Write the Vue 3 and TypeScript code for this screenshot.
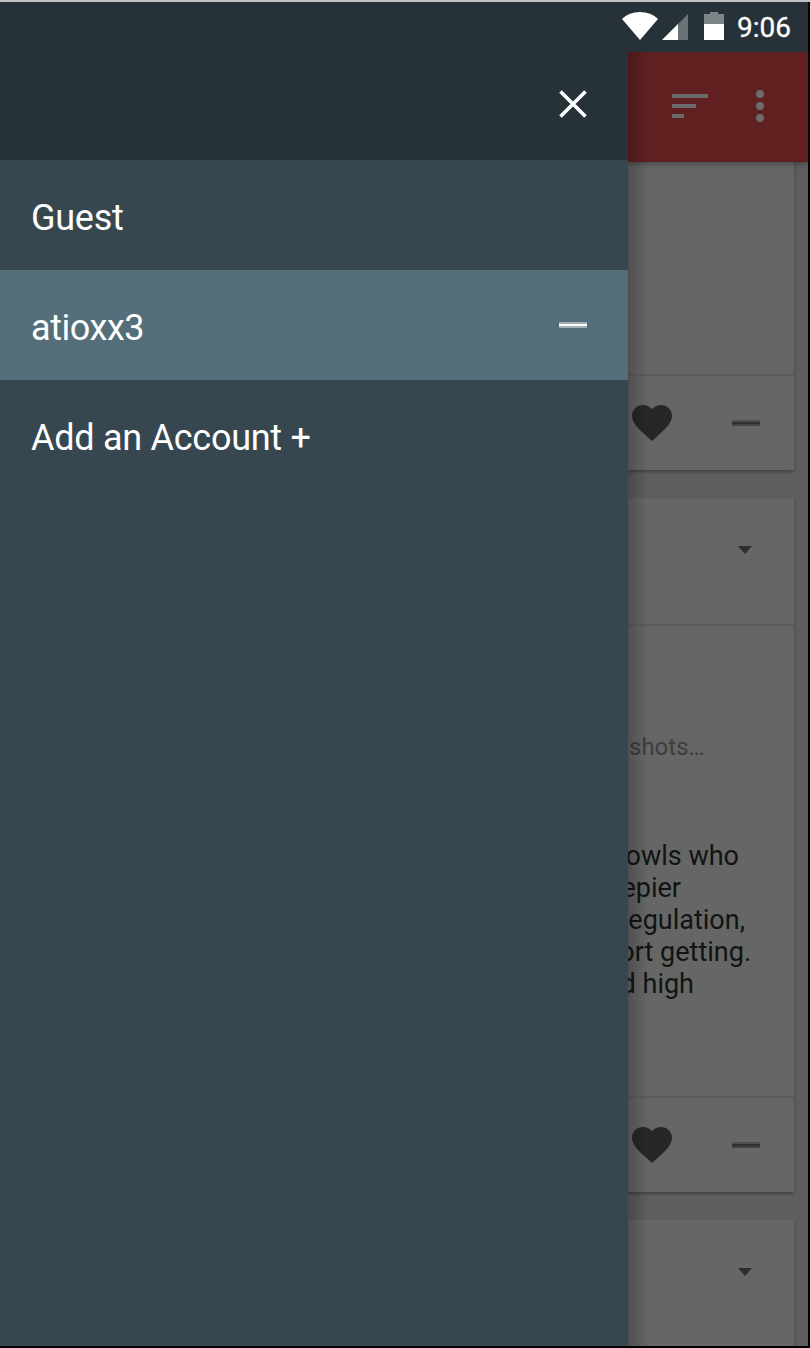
<script setup lang="ts">
interface Account {
  name: string
  active: boolean
}

interface BodyLine {
  text: string
  end: number
}

const accounts: Account[] = [
  { name: 'Guest', active: false },
  { name: 'atioxx3', active: true },
  { name: 'Add an Account +', active: false },
]

// `end` is the free space to the right of each line inside the card.
const lines: BodyLine[] = [
  { text: 'owls who', end: 55 },
  { text: 'epier', end: 113 },
  { text: 'egulation,', end: 49 },
  { text: 'ort getting.', end: 43 },
  { text: 'd high', end: 100 },
]
const heart =
  'M12 21.35l-1.45-1.32C5.4 15.36 2 12.28 2 8.5 2 5.42 4.42 3 7.5 3c1.74 0 3.41.81 4.5 2.09C13.09 3.81 14.76 3 16.5 3 19.58 3 22 5.42 22 8.5c0 3.78-3.4 6.86-8.55 11.54L12 21.35z'
</script>

<template>
  <div class="device">
    <div class="screen">
      <header class="status">
        <svg class="wifi" viewBox="0 0 36 28"><path d="M18 28L0 7Q7 0 18 0T36 7Z" fill="#fff" /></svg>
        <svg class="signal" viewBox="0 0 26 26">
          <path d="M26 0V26H0Z" fill="#697275" />
          <path d="M16 10V26H0Z" fill="#fff" />
        </svg>
        <svg class="battery" viewBox="0 0 20 28">
          <path d="M6 0H14V2H20V12H0V2H6Z" fill="#7d8588" />
          <path d="M0 12H20V28H0Z" fill="#fff" />
        </svg>
        <span class="clock">9:06</span>
      </header>
      <div class="main">
        <nav class="drawer">
          <div class="drawer-head">
            <svg class="close" viewBox="0 0 28 28"><path d="M1.5 1.5L26.5 26.5M26.5 1.5L1.5 26.5" stroke="#fff" stroke-width="3.6" /></svg>
          </div>
          <div v-for="a in accounts" :key="a.name" class="row" :class="{ active: a.active }">
            <span class="name">{{ a.name }}</span>
            <span v-if="a.active" class="minus light"></span>
          </div>
        </nav>
        <section class="content">
          <div class="toolbar">
            <svg class="sort" viewBox="0 0 36 24"><path d="M0 0H36V4H0ZM0 10H24V14H0ZM0 20H12V24H0Z" fill="#6b6b6b" /></svg>
            <svg class="more" viewBox="0 0 8 32">
              <circle cx="4" cy="4" r="4" /><circle cx="4" cy="16" r="4" /><circle cx="4" cy="28" r="4" />
            </svg>
          </div>
          <div class="feed">
            <article class="card first">
              <div class="blank"></div>
              <div class="actions">
                <svg class="heart" viewBox="2 3 20 18.35" preserveAspectRatio="none"><path :d="heart" /></svg>
                <span class="minus"></span>
              </div>
            </article>
            <article class="card second">
              <div class="card-head"><svg class="caret" viewBox="0 0 14 8"><path d="M0 0H14L7 8Z" /></svg></div>
              <div class="card-body">
                <p class="link">shots…</p>
                <p v-for="l in lines" :key="l.text" class="line" :style="{ paddingRight: l.end + 'px' }">{{ l.text }}</p>
              </div>
              <div class="actions">
                <svg class="heart" viewBox="2 3 20 18.35" preserveAspectRatio="none"><path :d="heart" /></svg>
                <span class="minus"></span>
              </div>
            </article>
            <article class="card third">
              <div class="card-head"><svg class="caret" viewBox="0 0 14 8"><path d="M0 0H14L7 8Z" /></svg></div>
            </article>
          </div>
          <div class="edge"></div>
        </section>
      </div>
    </div>
  </div>
</template>

<style>
body { margin: 0; background: #000; }
</style>

<style scoped>
.device {
  box-sizing: border-box;
  width: 810px;
  height: 1348px;
  border-top: 2px solid #bfc1c1;
  background: #000;
  overflow: hidden;
  font-family: Roboto, sans-serif;
}
svg { display: block; flex: none; }
p { margin: 0; }
.screen { width: 808px; height: 1344px; overflow: hidden; background: #263238; }
.status { display: flex; height: 50px; align-items: flex-start; background: #273238; }
.wifi { width: 36px; height: 28px; margin: 10px 0 0 622px; }
.signal { width: 26px; height: 26px; margin: 12px 0 0 4px; }
.battery { width: 20px; height: 28px; margin: 10px 0 0 16px; }
.clock { margin: 10px 0 0 13px; font-size: 28px; line-height: 32px; color: #fff; white-space: nowrap; -webkit-text-stroke: 0.3px #fff; }
.main { display: flex; height: 1294px; }
.drawer { width: 628px; flex: none; background: #37474f; }
.drawer-head { display: flex; height: 108px; justify-content: flex-end; background: #273238; }
.close { width: 28px; height: 28px; margin: 38px 41px 0 0; }
.row {
  box-sizing: border-box;
  display: flex;
  height: 110px;
  padding: 0 41px 0 31px;
  align-items: center;
  justify-content: space-between;
  color: #fff;
}
.row.active { background: #546e7a; }
.name { font-size: 36px; line-height: 42px; padding-top: 5px; white-space: nowrap; letter-spacing: -0.27px; }
.row.active .name { padding-top: 6px; letter-spacing: -0.45px; }
.minus { width: 28px; height: 4px; flex: none; background: #343434; }
.minus.light { height: 6px; background: linear-gradient(#a3b0b7 2px, #fff 2px 4px, #a3b0b7 4px); }
.content { position: relative; width: 180px; overflow: hidden; background: #5e5e5e; }
.toolbar { position: relative; display: flex; height: 110px; background: #602020; box-shadow: 0 2px 6px rgba(0, 0, 0, 0.3); z-index: 1; }
.sort { width: 36px; height: 24px; margin: 42px 0 0 44px; }
.more { width: 8px; height: 32px; margin: 38px 0 0 48px; fill: #6b6b6b; }
.feed { display: flex; flex-direction: column; gap: 28px; }
.card { width: 166px; background: #666; box-shadow: 0 2px 3px rgba(0, 0, 0, 0.3); }
.first { height: 308px; }
.blank { height: 212px; }
.second { height: 694px; }
.third { height: 140px; }
.actions { box-sizing: border-box; display: flex; height: 96px; padding: 0 34px 0 4px; justify-content: space-between; align-items: center; border-top: 2px solid #5d5d5d; }
.heart { width: 40px; height: 36px; fill: #272727; }
.minus:not(.light) { height: 6px; background: linear-gradient(#4e4e4e 2px, #303030 2px 4px, #434343 4px); }
.card-head { display: flex; height: 126px; }
.caret { width: 14px; height: 8px; margin: 48px 0 0 110px; fill: #2e2e2e; }
.card-body { box-sizing: border-box; height: 472px; border-top: 2px solid #5d5d5d; padding-top: 107px; }
.link { height: 107px; padding-left: 1px; font-size: 24px; line-height: 28px; color: #3e3e3e; }
.line { display: flex; justify-content: flex-end; height: 32px; font-size: 27px; line-height: 32px; color: #101414; white-space: nowrap; }
.edge { position: absolute; z-index: 2; inset: 0 auto 0 0; width: 20px; background: linear-gradient(90deg, rgba(0, 0, 0, 0.22), rgba(0, 0, 0, 0)); }
</style>
